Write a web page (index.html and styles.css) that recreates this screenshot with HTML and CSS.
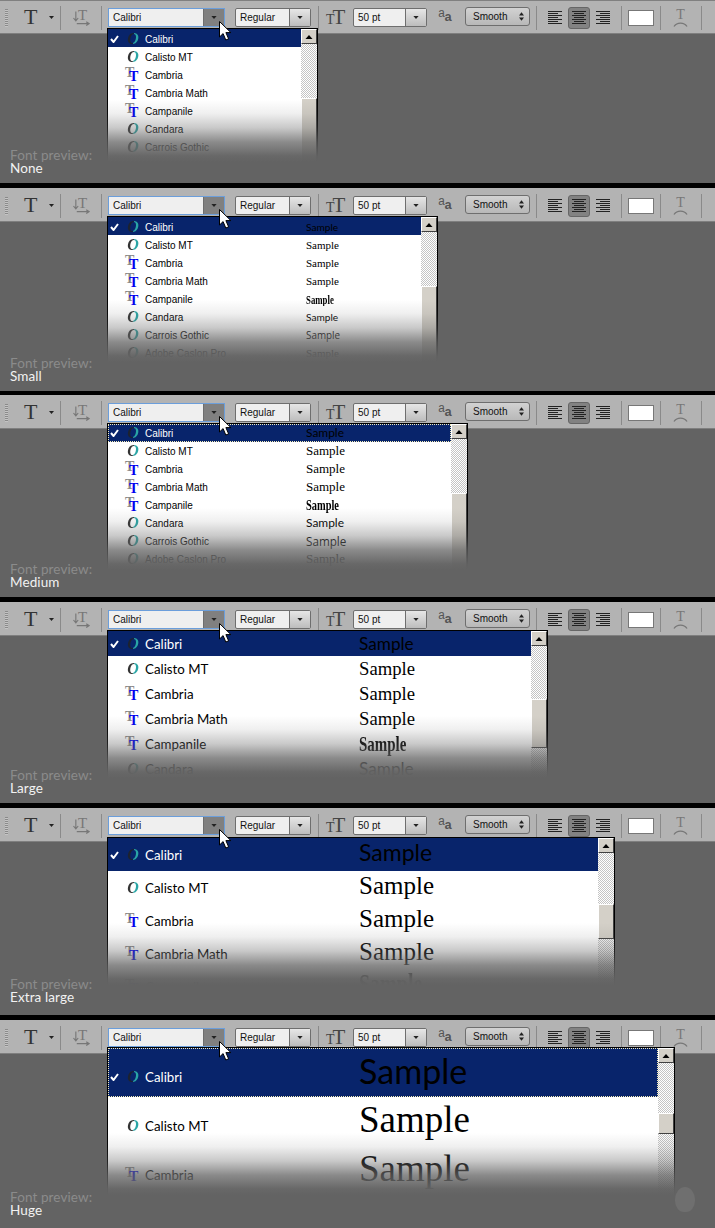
FILE: index.html
```html
<!DOCTYPE html>
<html lang="en">
<head>
    <meta charset="UTF-8">
    <title>Font preview sizes</title>
    <link rel="stylesheet" href="styles.css">
</head>
<body>
    <!-- shared toolbar icons -->
    <svg class="icon-defs" aria-hidden="true">
        <symbol id="caret" viewBox="0 0 7 4"><path d="M0 0h7L3.5 4z"/></symbol>
        <symbol id="updown" viewBox="0 0 7 12"><path d="M3.5 0L7 4.5H0zM3.5 12L0 7.5h7z"/></symbol>
        <symbol id="check" viewBox="0 0 9 8"><path d="M1 4l2.5 3L8 1" fill="none" stroke="#fff" stroke-width="2"/></symbol>
        <symbol id="orient" viewBox="0 0 18 16"><path d="M3 1v9M0.5 8L3 11l2.5-3M4 14h13M14 12l3 2-3 2" fill="none" stroke="#777" stroke-width="1.2"/></symbol>
        <symbol id="align-left" viewBox="0 0 14 14"><path d="M0 .5h14M0 2.5h10M0 4.5h14M0 6.5h10M0 8.5h14M0 10.5h10M0 12.5h14" stroke="#222"/></symbol>
        <symbol id="align-center" viewBox="0 0 14 14"><path d="M0 .5h14M2 2.5h10M0 4.5h14M2 6.5h10M0 8.5h14M2 10.5h10M0 12.5h14" stroke="#222"/></symbol>
        <symbol id="align-right" viewBox="0 0 14 14"><path d="M0 .5h14M4 2.5h10M0 4.5h14M4 6.5h10M0 8.5h14M4 10.5h10M0 12.5h14" stroke="#222"/></symbol>
        <symbol id="warp-arc" viewBox="0 0 15 6"><path d="M1 5.5C4 1 11 1 14 5.5" fill="none" stroke="#777" stroke-width="1.3"/></symbol>
        <symbol id="pointer" viewBox="0 0 13 20"><path d="M.5.5v15.5l3.6-3.4 2.7 6.4 2.8-1.2-2.7-6.2h5z" fill="#fff" stroke="#000"/></symbol>
    </svg>

    <!-- None -->
    <div class="panel p-none">
        <div class="bar">
            <span class="grip"></span><span class="tool-t">T</span><svg class="tool-caret"><use href="#caret"/></svg><span class="sep sep-a"></span>
            <span class="orient-box"><span class="orient-t">T</span><svg class="orient"><use href="#orient"/></svg></span><span class="sep sep-b"></span>
            <span class="field field-font"><span class="field-text">Calibri</span><span class="field-btn"><svg><use href="#caret"/></svg></span></span>
            <span class="field field-style"><span class="field-text">Regular</span><span class="field-btn"><svg><use href="#caret"/></svg></span></span><span class="sep sep-c"></span>
            <span class="size-icon"><small>T</small>T</span>
            <span class="field field-size"><span class="field-text">50 pt</span><span class="field-btn"><svg><use href="#caret"/></svg></span></span>
            <span class="aa-icon"><small>a</small><b>a</b></span>
            <span class="field field-smooth"><span class="field-text">Smooth</span><svg class="updown"><use href="#updown"/></svg></span><span class="sep sep-d"></span>
            <svg class="align align-l"><use href="#align-left"/></svg><span class="align-btn"><svg class="align"><use href="#align-center"/></svg></span><svg class="align align-r"><use href="#align-right"/></svg><span class="sep sep-e"></span>
            <span class="swatch"></span><span class="sep sep-f"></span>
            <span class="warp"><span class="warp-t">T</span><svg><use href="#warp-arc"/></svg></span><span class="sep sep-g"></span>
        </div>
        <div class="stage">
            <div class="caption"><div class="caption-label">Font preview:</div><div class="caption-value">None</div></div>
            <div class="list">
                <div class="rows">
                    <div class="row selected"><svg class="check"><use href="#check"/></svg><span class="ico ico-o">O</span><span class="name">Calibri</span></div>
                    <div class="row"><span class="check"></span><span class="ico ico-o">O</span><span class="name">Calisto MT</span></div>
                    <div class="row"><span class="check"></span><span class="ico ico-t">T</span><span class="name">Cambria</span></div>
                    <div class="row"><span class="check"></span><span class="ico ico-t">T</span><span class="name">Cambria Math</span></div>
                    <div class="row"><span class="check"></span><span class="ico ico-t">T</span><span class="name">Campanile</span></div>
                    <div class="row"><span class="check"></span><span class="ico ico-o">O</span><span class="name">Candara</span></div>
                    <div class="row"><span class="check"></span><span class="ico ico-o">O</span><span class="name">Carrois Gothic</span></div>
                </div>
                <div class="scroll"><span class="scroll-up"><svg><use href="#caret"/></svg></span><span class="scroll-track"></span><span class="scroll-thumb"></span></div>
            </div>
        </div>
        <svg class="cursor"><use href="#pointer"/></svg>
    </div>

    <!-- Small -->
    <div class="panel p-small">
        <div class="bar">
            <span class="grip"></span><span class="tool-t">T</span><svg class="tool-caret"><use href="#caret"/></svg><span class="sep sep-a"></span>
            <span class="orient-box"><span class="orient-t">T</span><svg class="orient"><use href="#orient"/></svg></span><span class="sep sep-b"></span>
            <span class="field field-font"><span class="field-text">Calibri</span><span class="field-btn"><svg><use href="#caret"/></svg></span></span>
            <span class="field field-style"><span class="field-text">Regular</span><span class="field-btn"><svg><use href="#caret"/></svg></span></span><span class="sep sep-c"></span>
            <span class="size-icon"><small>T</small>T</span>
            <span class="field field-size"><span class="field-text">50 pt</span><span class="field-btn"><svg><use href="#caret"/></svg></span></span>
            <span class="aa-icon"><small>a</small><b>a</b></span>
            <span class="field field-smooth"><span class="field-text">Smooth</span><svg class="updown"><use href="#updown"/></svg></span><span class="sep sep-d"></span>
            <svg class="align align-l"><use href="#align-left"/></svg><span class="align-btn"><svg class="align"><use href="#align-center"/></svg></span><svg class="align align-r"><use href="#align-right"/></svg><span class="sep sep-e"></span>
            <span class="swatch"></span><span class="sep sep-f"></span>
            <span class="warp"><span class="warp-t">T</span><svg><use href="#warp-arc"/></svg></span><span class="sep sep-g"></span>
        </div>
        <div class="stage">
            <div class="caption"><div class="caption-label">Font preview:</div><div class="caption-value">Small</div></div>
            <div class="list">
                <div class="rows">
                    <div class="row selected"><svg class="check"><use href="#check"/></svg><span class="ico ico-o">O</span><span class="name">Calibri</span><span class="sample s-calibri">Sample</span></div>
                    <div class="row"><span class="check"></span><span class="ico ico-o">O</span><span class="name">Calisto MT</span><span class="sample s-calisto">Sample</span></div>
                    <div class="row"><span class="check"></span><span class="ico ico-t">T</span><span class="name">Cambria</span><span class="sample s-cambria">Sample</span></div>
                    <div class="row"><span class="check"></span><span class="ico ico-t">T</span><span class="name">Cambria Math</span><span class="sample s-cambria">Sample</span></div>
                    <div class="row"><span class="check"></span><span class="ico ico-t">T</span><span class="name">Campanile</span><span class="sample s-campanile">Sample</span></div>
                    <div class="row"><span class="check"></span><span class="ico ico-o">O</span><span class="name">Candara</span><span class="sample s-candara">Sample</span></div>
                    <div class="row"><span class="check"></span><span class="ico ico-o">O</span><span class="name">Carrois Gothic</span><span class="sample s-carrois">Sample</span></div>
                    <div class="row"><span class="check"></span><span class="ico ico-o">O</span><span class="name">Adobe Caslon Pro</span><span class="sample s-caslon">Sample</span></div>
                </div>
                <div class="scroll"><span class="scroll-up"><svg><use href="#caret"/></svg></span><span class="scroll-track"></span><span class="scroll-thumb"></span></div>
            </div>
        </div>
        <svg class="cursor"><use href="#pointer"/></svg>
    </div>

    <!-- Medium -->
    <div class="panel p-medium">
        <div class="bar">
            <span class="grip"></span><span class="tool-t">T</span><svg class="tool-caret"><use href="#caret"/></svg><span class="sep sep-a"></span>
            <span class="orient-box"><span class="orient-t">T</span><svg class="orient"><use href="#orient"/></svg></span><span class="sep sep-b"></span>
            <span class="field field-font"><span class="field-text">Calibri</span><span class="field-btn"><svg><use href="#caret"/></svg></span></span>
            <span class="field field-style"><span class="field-text">Regular</span><span class="field-btn"><svg><use href="#caret"/></svg></span></span><span class="sep sep-c"></span>
            <span class="size-icon"><small>T</small>T</span>
            <span class="field field-size"><span class="field-text">50 pt</span><span class="field-btn"><svg><use href="#caret"/></svg></span></span>
            <span class="aa-icon"><small>a</small><b>a</b></span>
            <span class="field field-smooth"><span class="field-text">Smooth</span><svg class="updown"><use href="#updown"/></svg></span><span class="sep sep-d"></span>
            <svg class="align align-l"><use href="#align-left"/></svg><span class="align-btn"><svg class="align"><use href="#align-center"/></svg></span><svg class="align align-r"><use href="#align-right"/></svg><span class="sep sep-e"></span>
            <span class="swatch"></span><span class="sep sep-f"></span>
            <span class="warp"><span class="warp-t">T</span><svg><use href="#warp-arc"/></svg></span><span class="sep sep-g"></span>
        </div>
        <div class="stage">
            <div class="caption"><div class="caption-label">Font preview:</div><div class="caption-value">Medium</div></div>
            <div class="list">
                <div class="rows">
                    <div class="row selected focused"><svg class="check"><use href="#check"/></svg><span class="ico ico-o">O</span><span class="name">Calibri</span><span class="sample s-calibri">Sample</span></div>
                    <div class="row"><span class="check"></span><span class="ico ico-o">O</span><span class="name">Calisto MT</span><span class="sample s-calisto">Sample</span></div>
                    <div class="row"><span class="check"></span><span class="ico ico-t">T</span><span class="name">Cambria</span><span class="sample s-cambria">Sample</span></div>
                    <div class="row"><span class="check"></span><span class="ico ico-t">T</span><span class="name">Cambria Math</span><span class="sample s-cambria">Sample</span></div>
                    <div class="row"><span class="check"></span><span class="ico ico-t">T</span><span class="name">Campanile</span><span class="sample s-campanile">Sample</span></div>
                    <div class="row"><span class="check"></span><span class="ico ico-o">O</span><span class="name">Candara</span><span class="sample s-candara">Sample</span></div>
                    <div class="row"><span class="check"></span><span class="ico ico-o">O</span><span class="name">Carrois Gothic</span><span class="sample s-carrois">Sample</span></div>
                    <div class="row"><span class="check"></span><span class="ico ico-o">O</span><span class="name">Adobe Caslon Pro</span><span class="sample s-caslon">Sample</span></div>
                </div>
                <div class="scroll"><span class="scroll-up"><svg><use href="#caret"/></svg></span><span class="scroll-track"></span><span class="scroll-thumb"></span></div>
            </div>
        </div>
        <svg class="cursor"><use href="#pointer"/></svg>
    </div>

    <!-- Large -->
    <div class="panel p-large">
        <div class="bar">
            <span class="grip"></span><span class="tool-t">T</span><svg class="tool-caret"><use href="#caret"/></svg><span class="sep sep-a"></span>
            <span class="orient-box"><span class="orient-t">T</span><svg class="orient"><use href="#orient"/></svg></span><span class="sep sep-b"></span>
            <span class="field field-font"><span class="field-text">Calibri</span><span class="field-btn"><svg><use href="#caret"/></svg></span></span>
            <span class="field field-style"><span class="field-text">Regular</span><span class="field-btn"><svg><use href="#caret"/></svg></span></span><span class="sep sep-c"></span>
            <span class="size-icon"><small>T</small>T</span>
            <span class="field field-size"><span class="field-text">50 pt</span><span class="field-btn"><svg><use href="#caret"/></svg></span></span>
            <span class="aa-icon"><small>a</small><b>a</b></span>
            <span class="field field-smooth"><span class="field-text">Smooth</span><svg class="updown"><use href="#updown"/></svg></span><span class="sep sep-d"></span>
            <svg class="align align-l"><use href="#align-left"/></svg><span class="align-btn"><svg class="align"><use href="#align-center"/></svg></span><svg class="align align-r"><use href="#align-right"/></svg><span class="sep sep-e"></span>
            <span class="swatch"></span><span class="sep sep-f"></span>
            <span class="warp"><span class="warp-t">T</span><svg><use href="#warp-arc"/></svg></span><span class="sep sep-g"></span>
        </div>
        <div class="stage">
            <div class="caption"><div class="caption-label">Font preview:</div><div class="caption-value">Large</div></div>
            <div class="list">
                <div class="rows">
                    <div class="row selected"><svg class="check"><use href="#check"/></svg><span class="ico ico-o">O</span><span class="name">Calibri</span><span class="sample s-calibri">Sample</span></div>
                    <div class="row"><span class="check"></span><span class="ico ico-o">O</span><span class="name">Calisto MT</span><span class="sample s-calisto">Sample</span></div>
                    <div class="row"><span class="check"></span><span class="ico ico-t">T</span><span class="name">Cambria</span><span class="sample s-cambria">Sample</span></div>
                    <div class="row"><span class="check"></span><span class="ico ico-t">T</span><span class="name">Cambria Math</span><span class="sample s-cambria">Sample</span></div>
                    <div class="row"><span class="check"></span><span class="ico ico-t">T</span><span class="name">Campanile</span><span class="sample s-campanile">Sample</span></div>
                    <div class="row"><span class="check"></span><span class="ico ico-o">O</span><span class="name">Candara</span><span class="sample s-candara">Sample</span></div>
                </div>
                <div class="scroll"><span class="scroll-up"><svg><use href="#caret"/></svg></span><span class="scroll-track"></span><span class="scroll-thumb"></span><span class="scroll-track"></span></div>
            </div>
        </div>
        <svg class="cursor"><use href="#pointer"/></svg>
    </div>

    <!-- Extra large -->
    <div class="panel p-xlarge">
        <div class="bar">
            <span class="grip"></span><span class="tool-t">T</span><svg class="tool-caret"><use href="#caret"/></svg><span class="sep sep-a"></span>
            <span class="orient-box"><span class="orient-t">T</span><svg class="orient"><use href="#orient"/></svg></span><span class="sep sep-b"></span>
            <span class="field field-font"><span class="field-text">Calibri</span><span class="field-btn"><svg><use href="#caret"/></svg></span></span>
            <span class="field field-style"><span class="field-text">Regular</span><span class="field-btn"><svg><use href="#caret"/></svg></span></span><span class="sep sep-c"></span>
            <span class="size-icon"><small>T</small>T</span>
            <span class="field field-size"><span class="field-text">50 pt</span><span class="field-btn"><svg><use href="#caret"/></svg></span></span>
            <span class="aa-icon"><small>a</small><b>a</b></span>
            <span class="field field-smooth"><span class="field-text">Smooth</span><svg class="updown"><use href="#updown"/></svg></span><span class="sep sep-d"></span>
            <svg class="align align-l"><use href="#align-left"/></svg><span class="align-btn"><svg class="align"><use href="#align-center"/></svg></span><svg class="align align-r"><use href="#align-right"/></svg><span class="sep sep-e"></span>
            <span class="swatch"></span><span class="sep sep-f"></span>
            <span class="warp"><span class="warp-t">T</span><svg><use href="#warp-arc"/></svg></span><span class="sep sep-g"></span>
        </div>
        <div class="stage">
            <div class="caption"><div class="caption-label">Font preview:</div><div class="caption-value">Extra large</div></div>
            <div class="list">
                <div class="rows">
                    <div class="row selected"><svg class="check"><use href="#check"/></svg><span class="ico ico-o">O</span><span class="name">Calibri</span><span class="sample s-calibri">Sample</span></div>
                    <div class="row"><span class="check"></span><span class="ico ico-o">O</span><span class="name">Calisto MT</span><span class="sample s-calisto">Sample</span></div>
                    <div class="row"><span class="check"></span><span class="ico ico-t">T</span><span class="name">Cambria</span><span class="sample s-cambria">Sample</span></div>
                    <div class="row"><span class="check"></span><span class="ico ico-t">T</span><span class="name">Cambria Math</span><span class="sample s-cambria">Sample</span></div>
                    <div class="row"><span class="check"></span><span class="ico ico-t">T</span><span class="name">Campanile</span><span class="sample s-campanile">Sample</span></div>
                </div>
                <div class="scroll"><span class="scroll-up"><svg><use href="#caret"/></svg></span><span class="scroll-track"></span><span class="scroll-thumb"></span><span class="scroll-track"></span></div>
            </div>
        </div>
        <svg class="cursor"><use href="#pointer"/></svg>
    </div>

    <!-- Huge -->
    <div class="panel p-huge">
        <div class="bar">
            <span class="grip"></span><span class="tool-t">T</span><svg class="tool-caret"><use href="#caret"/></svg><span class="sep sep-a"></span>
            <span class="orient-box"><span class="orient-t">T</span><svg class="orient"><use href="#orient"/></svg></span><span class="sep sep-b"></span>
            <span class="field field-font"><span class="field-text">Calibri</span><span class="field-btn"><svg><use href="#caret"/></svg></span></span>
            <span class="field field-style"><span class="field-text">Regular</span><span class="field-btn"><svg><use href="#caret"/></svg></span></span><span class="sep sep-c"></span>
            <span class="size-icon"><small>T</small>T</span>
            <span class="field field-size"><span class="field-text">50 pt</span><span class="field-btn"><svg><use href="#caret"/></svg></span></span>
            <span class="aa-icon"><small>a</small><b>a</b></span>
            <span class="field field-smooth"><span class="field-text">Smooth</span><svg class="updown"><use href="#updown"/></svg></span><span class="sep sep-d"></span>
            <svg class="align align-l"><use href="#align-left"/></svg><span class="align-btn"><svg class="align"><use href="#align-center"/></svg></span><svg class="align align-r"><use href="#align-right"/></svg><span class="sep sep-e"></span>
            <span class="swatch"></span><span class="sep sep-f"></span>
            <span class="warp"><span class="warp-t">T</span><svg><use href="#warp-arc"/></svg></span><span class="sep sep-g"></span>
        </div>
        <div class="stage">
            <div class="caption"><div class="caption-label">Font preview:</div><div class="caption-value">Huge</div></div>
            <div class="list">
                <div class="rows">
                    <div class="row selected focused"><svg class="check"><use href="#check"/></svg><span class="ico ico-o">O</span><span class="name">Calibri</span><span class="sample s-calibri">Sample</span></div>
                    <div class="row"><span class="check"></span><span class="ico ico-o">O</span><span class="name">Calisto MT</span><span class="sample s-calisto">Sample</span></div>
                    <div class="row"><span class="check"></span><span class="ico ico-t">T</span><span class="name">Cambria</span><span class="sample s-cambria">Sample</span></div>
                </div>
                <div class="scroll"><span class="scroll-up"><svg><use href="#caret"/></svg></span><span class="scroll-track"></span><span class="scroll-thumb"></span><span class="scroll-track"></span></div>
            </div>
            <div class="blob"></div>
        </div>
        <svg class="cursor"><use href="#pointer"/></svg>
    </div>
</body>
</html>
```

FILE: styles.css
```css
body {
    margin: 0;
    background: #636363;
    font-family: "Liberation Sans", Arial, sans-serif;
    overflow: hidden;
}
.icon-defs {
    display: block;
    width: 0;
    height: 0;
}

/* each panel is one toolbar + the dropdown under it */
.panel {
    --row: 18px;
    --row-shift: 0px;
    --name-w: 161px;
    --name-size: 10px;
    --sample-size: 11px;
    --sample-shift: 0px;
    --list-w: 211px;
    --list-h: 134px;
    --list-top: -6px;
    --thumb-top: 54px;
    --thumb-h: 90px;
    position: relative;
    display: flex;
    flex-direction: column;
    border-bottom: 5px solid #000;
    background: #636363;
}
.p-none { height: 183px; --row-shift: 2px; }
.p-small { height: 203px; border-bottom-width: 4px; --list-w: 331px; --list-h: 146px; --row-shift: 2px; }
.p-medium { height: 202px; --list-w: 361px; --list-h: 147px; --sample-size: 13px; }
.p-large { height: 201px; --row: 25px; --name-w: 214px; --name-size: 13.3px; --sample-size: 18.7px; --sample-shift: -1px; --list-w: 441px; --list-h: 148px; --thumb-top: 53px; --thumb-h: 49px; }
.p-xlarge { height: 207px; --row: 33px; --name-w: 214px; --name-size: 13.3px; --sample-size: 25px; --sample-shift: -4px; --list-w: 508px; --list-h: 148px; --list-top: -5px; --thumb-top: 51px; --thumb-h: 35px; }
.p-huge { height: 208px; border-bottom: 0; --row: 49px; --row-shift: 8px; --name-w: 214px; --name-size: 13.3px; --sample-size: 37px; --sample-shift: -13px; --list-w: 568px; --list-h: 148px; --list-top: -7px; --thumb-top: 50px; --thumb-h: 21px; }

/* toolbar */
.bar {
    display: flex;
    align-items: center;
    flex: none;
    box-sizing: border-box;
    height: 34px;
    padding: 2px 0 0 5px;
    background: #b3b3b3;
    border-bottom: 1px solid #7f7f7f;
    color: #111;
    font-size: 10px;
}
.p-none .bar {
    border-top: 1px solid #808080;
    padding-top: 1px;
}
.grip {
    width: 3px;
    height: 18px;
    background: repeating-linear-gradient(to bottom, #8a8a8a 0 1px, #c4c4c4 1px 2px);
}
.tool-t {
    width: 12px;
    margin: -2px 0 0 16px;
    font: 22px/22px "Liberation Serif", serif;
    color: #333;
    text-align: center;
}
.tool-caret {
    width: 5px;
    height: 3px;
    margin-left: 13px;
    fill: #222;
}
.sep {
    width: 1px;
    height: 24px;
    background: #8a8a8a;
}
.sep-a { margin-left: 6px; }
.sep-b { margin-left: 11px; }
.sep-c { margin-left: 7px; }
.sep-d { margin-left: 6px; }
.sep-e { margin-left: 11px; }
.sep-f { margin-left: 6px; }
.sep-g { margin-left: 13px; }

.orient-box {
    position: relative;
    width: 17px;
    height: 16px;
    margin-left: 12px;
}
.orient-t {
    position: absolute;
    left: 5px;
    top: -2px;
    font: 15px/15px "Liberation Serif", serif;
    color: #777;
}
.orient {
    display: block;
    width: 17px;
    height: 16px;
}

.field {
    display: flex;
    align-items: stretch;
    box-sizing: border-box;
    height: 19px;
    border: 1px solid #6e6e6e;
    border-radius: 2px;
    background: #efefef;
    line-height: 17px;
    white-space: nowrap;
}
.field-text {
    flex: 1;
    padding-left: 4px;
}
.field-btn {
    display: flex;
    align-items: center;
    justify-content: center;
    width: 20px;
    border-left: 1px solid #6e6e6e;
    background: linear-gradient(to bottom, #e6e6e6, #bdbdbd);
}
.field-btn svg {
    width: 6px;
    height: 3px;
    fill: #222;
}
.field-font {
    width: 117px;
    margin-left: 6px;
    border-color: #6b9edb;
    border-radius: 0;
}
.field-font .field-btn {
    background: #808080;
}
.field-style { width: 76px; margin-left: 10px; }
.field-size { width: 74px; margin-left: 8px; }
.field-smooth {
    width: 65px;
    margin: -2px 0 0 12px;
    align-items: center;
    border-radius: 3px;
    background: linear-gradient(to bottom, #d2d2d2, #b8b8b8);
}
.field-smooth .field-text { padding-left: 7px; }
.updown {
    width: 5px;
    height: 9px;
    margin-right: 5px;
    fill: #222;
}

.size-icon {
    width: 19px;
    margin: 1px 0 0 7px;
    font: 21px/20px "Liberation Serif", serif;
    color: #444;
    white-space: nowrap;
}
.size-icon small {
    font-size: 14px;
    margin-right: -2px;
}
.aa-icon {
    width: 15px;
    margin-left: 11px;
    font: 12px/14px "Liberation Mono", monospace;
    color: #555;
    white-space: nowrap;
}
.aa-icon small {
    font-size: 12px;
    position: relative;
    top: -4px;
    margin-right: -1px;
}
.aa-icon b {
    font-size: 13px;
}
.align {
    display: block;
    width: 14px;
    height: 14px;
}
.align-l { margin-left: 11px; }
.align-r { margin-left: 6px; }
.align-btn {
    display: flex;
    align-items: center;
    justify-content: center;
    box-sizing: border-box;
    width: 22px;
    height: 22px;
    margin-left: 6px;
    background: #828282;
    border: 1px solid #666;
    border-radius: 3px;
}
.swatch {
    box-sizing: border-box;
    width: 26px;
    height: 16px;
    margin-left: 6px;
    background: #fff;
    border: 1px solid #777;
}
.warp {
    display: flex;
    flex-direction: column;
    align-items: center;
    width: 15px;
    margin-left: 12px;
}
.warp-t {
    font: 14px/13px "Liberation Serif", serif;
    color: #777;
}
.warp svg {
    width: 15px;
    height: 6px;
}

/* area under the toolbar */
.stage {
    flex: 1;
    display: flex;
    min-height: 0;
}
.caption {
    flex: none;
    align-self: flex-end;
    box-sizing: border-box;
    width: 107px;
    padding: 0 0 8px 10px;
    font-family: Lato, "Open Sans", sans-serif;
    font-size: 13.5px;
    line-height: 13px;
    letter-spacing: .1px;
    white-space: nowrap;
}
.caption-label { color: #8b8b8b; }
.caption-value { color: #f2f2f2; }
.p-huge .caption { padding-bottom: 11px; }
.p-xlarge .caption { padding-bottom: 11px; }

/* dropdown list, fades out at the bottom */
.list {
    position: relative;
    display: flex;
    flex: none;
    box-sizing: border-box;
    width: var(--list-w);
    height: var(--list-h);
    margin-top: var(--list-top);
    background: #fff;
    border: 1px solid #000;
    border-bottom: 0;
    clip-path: inset(0);
}
.list::after {
    content: "";
    position: absolute;
    left: -1px;
    right: -1px;
    bottom: 0;
    height: 62px;
    background: linear-gradient(to bottom, rgba(99,99,99,0) 0%, rgba(99,99,99,.1) 22%, rgba(99,99,99,.35) 45%, rgba(99,99,99,.75) 68%, rgba(99,99,99,.97) 90%, #636363 100%);
}
.rows {
    flex: 1;
    min-width: 0;
}
.row {
    display: flex;
    align-items: center;
    box-sizing: border-box;
    height: var(--row);
    padding-top: var(--row-shift);
    white-space: nowrap;
    color: #000;
}
.row.selected {
    background: #08246b;
    color: #fff;
}
.row.focused {
    outline: 1px dotted #f5edb8;
    outline-offset: -1px;
}
.check {
    flex: none;
    width: 18px;
    height: 8px;
    padding: 0 7px 0 2px;
    box-sizing: border-box;
}
.ico {
    flex: none;
    position: relative;
    box-sizing: border-box;
    font-family: "Liberation Serif", serif;
}
.ico-o {
    width: 12px;
    margin: 0 6px 0 1px;
    font-size: 16px;
    line-height: 16px;
    font-style: italic;
    font-weight: bold;
    text-align: center;
    background: linear-gradient(100deg, #333 52%, #2aa5a5 52%);
    -webkit-background-clip: text;
    background-clip: text;
    color: transparent;
}
.selected .ico-o {
    background-image: linear-gradient(100deg, #1c2230 52%, #2aa5a5 52%);
}
/* blue T on top of a grey one */
.ico-t {
    isolation: isolate;
    width: 19px;
    padding: 3px 0 0 3px;
    color: #0000f0;
    font-size: 14px;
    font-weight: bold;
    line-height: 13px;
}
.ico-t::before {
    content: "T";
    position: absolute;
    left: -1px;
    top: -1px;
    color: #8a8a8a;
    font-size: 14px;
    z-index: -1;
}
.name {
    flex: none;
    box-sizing: border-box;
    width: var(--name-w);
    font-size: var(--name-size);
}
.p-large .name, .p-xlarge .name, .p-huge .name {
    font-family: Lato, "Open Sans", sans-serif;
}
.sample {
    margin-top: var(--sample-shift);
    font-family: "Liberation Serif", serif;
    font-size: var(--sample-size);
    line-height: var(--row);
}
.selected .sample { color: #000; }
.s-calibri, .s-candara {
    font-family: Lato, sans-serif;
    font-size: calc(var(--sample-size) * .92);
}
.s-carrois {
    font-family: "Open Sans", sans-serif;
    font-size: calc(var(--sample-size) * .9);
}
.s-campanile {
    font-weight: bold;
    transform: scale(.8, 1.15);
    transform-origin: left center;
}

/* scrollbar */
.scroll {
    flex: none;
    display: flex;
    flex-direction: column;
    width: 16px;
    position: relative;
    background: repeating-conic-gradient(#fff 0 25%, #c4c4c4 0 50%) 0 0 / 2px 2px;
}
.scroll-up {
    flex: none;
    display: flex;
    align-items: center;
    justify-content: center;
    box-sizing: border-box;
    height: 15px;
    background: #d4d0c8;
    border: 1px solid;
    border-color: #fff #404040 #404040 #fff;
}
.scroll-up svg {
    width: 8px;
    height: 4px;
    fill: #000;
    transform: rotate(180deg);
}
.scroll-track {
    flex: none;
    height: var(--thumb-top);
}
.scroll-track:last-child {
    flex: 1;
}
.scroll-thumb {
    flex: none;
    box-sizing: border-box;
    height: var(--thumb-h);
    background: #d4d0c8;
    border: 1px solid;
    border-color: #fff #404040 #404040 #fff;
}

/* mouse pointer on top of the font field */
.cursor {
    position: absolute;
    left: 219px;
    top: 21px;
    width: 13px;
    height: 20px;
    z-index: 2;
}
.blob {
    width: 20px;
    height: 25px;
    margin: 133px 0 0 0;
    background: #6f6f6f;
    border-radius: 50% 50% 45% 45%;
}
```
